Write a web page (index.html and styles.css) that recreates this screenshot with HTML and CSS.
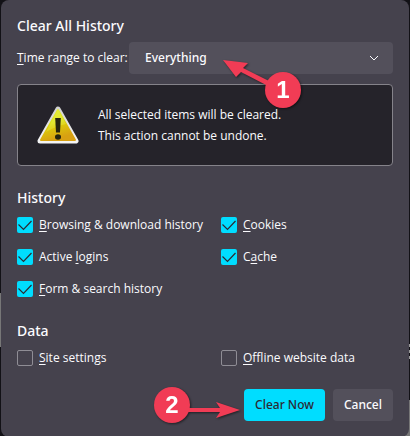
FILE: index.html
```html
<!DOCTYPE html>
<html lang="en">
<head>
<meta charset="utf-8">
<meta name="viewport" content="width=device-width, initial-scale=1">
<title>Clear All History</title>
<link rel="stylesheet" href="styles.css">
</head>
<body>
<form class="dialog">
  <h1 class="title">Clear All History</h1>
  <div class="range">
    <label for="range"><u>T</u>ime range to clear:</label>
    <div class="select-wrap">
      <select id="range" class="select">
        <option>Everything</option>
      </select>
      <svg class="chevron" viewBox="0 0 10 6" aria-hidden="true"><path d="M1 1l4 4 4-4"/></svg>
    </div>
  </div>
  <div class="warning">
    <svg class="warning-icon" viewBox="0 0 42 38" aria-hidden="true">
      <defs>
        <linearGradient id="yellow" x1="0" y1="0" x2="0.35" y2="1">
          <stop offset="0" stop-color="#e4ee32"/>
          <stop offset="0.5" stop-color="#dde01c"/>
          <stop offset="0.6" stop-color="#dccb0a"/>
          <stop offset="1" stop-color="#d8a012"/>
        </linearGradient>
        <linearGradient id="rim" x1="0" y1="0" x2="0" y2="1">
          <stop offset="0" stop-color="#d2d2d2"/>
          <stop offset="1" stop-color="#f4f4f4"/>
        </linearGradient>
      </defs>
      <path d="M21 3L39 35H3Z" fill="url(#rim)" stroke="url(#rim)" stroke-width="5" stroke-linejoin="round"/>
      <path d="M21 4L38 34H4Z" fill="url(#yellow)" stroke="url(#yellow)" stroke-width="2" stroke-linejoin="round"/>
      <path d="M21 4L29 18Q19 20 9 26Z" fill="#e9f04c" opacity="0.4"/>
      <path d="M18.200 12h5.600l-.8 14.500h-4z" fill="#25240f"/>
      <ellipse cx="21" cy="31" rx="3" ry="2.800" fill="#25240f"/>
    </svg>
    <p class="warning-text">All selected items will be cleared.<br>This action cannot be undone.</p>
  </div>
  <fieldset class="group">
    <legend class="heading">History</legend>
    <div class="options">
      <label class="option"><input type="checkbox" checked><span><u>B</u>rowsing &amp; download history</span></label>
      <label class="option"><input type="checkbox" checked><span><u>C</u>ookies</span></label>
      <label class="option"><input type="checkbox" checked><span>Active <u>l</u>ogins</span></label>
      <label class="option"><input type="checkbox" checked><span>C<u>a</u>che</span></label>
      <label class="option"><input type="checkbox" checked><span><u>F</u>orm &amp; search history</span></label>
    </div>
  </fieldset>
  <fieldset class="group">
    <legend class="heading">Data</legend>
    <div class="options">
      <label class="option"><input type="checkbox"><span><u>S</u>ite settings</span></label>
      <label class="option"><input type="checkbox"><span><u>O</u>ffline website data</span></label>
    </div>
  </fieldset>
  <div class="actions">
    <button type="submit" class="button primary">Clear Now</button>
    <button type="button" class="button">Cancel</button>
  </div>
  <svg class="mark mark-one" viewBox="0 0 84 54" role="img" aria-label="Step 1">
    <path d="M2 4L27 7L22 12L50 26L47 30L20 16L15 21Z"/>
    <circle cx="62" cy="34" r="18"/>
    <text x="62" y="42">1</text>
  </svg>
  <svg class="mark mark-two" viewBox="0 0 90 42" role="img" aria-label="Step 2">
    <path d="M34 22H67L63 16L87 24L63 32L67 26H34Z"/>
    <circle cx="19" cy="19" r="18"/>
    <text x="19" y="27">2</text>
  </svg>
</form>
</body>
</html>
```
FILE: styles.css
```css
* {
  box-sizing: border-box;
}

body {
  margin: 0;
  padding: 0 1px;
  min-height: 100vh;
  background:
    linear-gradient(#777, #777) 0 293px / 1px 54px no-repeat,
    linear-gradient(#777, #777) 100% 100% / 8px 37px no-repeat,
    repeating-linear-gradient(#999 0 3px, #121116 3px 6px) 100% 344px / 1px 16px no-repeat,
    #121116;
  color: #fbfbfe;
  font: 12px/20px "Open Sans", "Noto Sans", sans-serif;
}

.dialog {
  position: relative;
  min-height: 100vh;
  padding: 16px;
  border-radius: 8px;
  background: #45424d;
}

.title,
.heading {
  margin: 0;
  padding: 0;
  font: 500 14px/20px "Noto Sans", sans-serif;
}

u {
  text-underline-offset: 2px;
}

.range {
  display: flex;
  align-items: center;
  margin-top: 6px;
}

.range label {
  flex: 0 0 112px;
  white-space: nowrap;
}

.select-wrap {
  position: relative;
  flex: 1;
}

.select {
  display: block;
  appearance: none;
  width: 100%;
  height: 32px;
  padding: 0 16px;
  border: 0;
  border-radius: 4px;
  background: #53505b;
  color: inherit;
  font: 500 12px/20px "Noto Sans", sans-serif;
}

.chevron {
  position: absolute;
  top: 13px;
  right: 14px;
  width: 10px;
  height: 6px;
  fill: none;
  stroke: #fbfbfe;
  pointer-events: none;
}

.warning {
  display: flex;
  align-items: center;
  gap: 19px;
  margin-top: 10px;
  padding: 19px;
  border: 1px solid #85838a;
  border-radius: 4px;
  background: #25232a;
}

.warning-icon {
  width: 42px;
  height: 38px;
}

.warning-text {
  margin: 0;
  line-height: 21px;
}

.group {
  min-width: 0;
  margin: 22px 0 0;
  padding: 0;
  border: 0;
}

.options {
  display: grid;
  grid-template-columns: 204px 1fr;
  row-gap: 12px;
  padding-top: 7px;
}

.option {
  display: flex;
  align-items: center;
  gap: 6px;
  white-space: nowrap;
}

.option input {
  appearance: none;
  flex: none;
  width: 16px;
  height: 16px;
  margin: 0;
  border: 1px solid #8f8d95;
  border-radius: 2px;
  background: #45424d;
}

.option input:checked {
  border: 0;
  background: #00ddff url("data:image/svg+xml,%3Csvg xmlns='http://www.w3.org/2000/svg' viewBox='0 0 16 16'%3E%3Cpath d='M1.500 7.500l5 5 8-8.500' fill='none' stroke='%232b2a33' stroke-width='1.200'/%3E%3C/svg%3E");
}

.actions {
  display: flex;
  justify-content: flex-end;
  gap: 8px;
  margin-top: 21px;
}

.button {
  height: 32px;
  padding: 0 11px;
  border: 0;
  border-radius: 4px;
  background: #53505b;
  color: #fbfbfe;
  font: 500 12px/20px "Noto Sans", sans-serif;
}

.primary {
  background: #00ddff;
  color: #2b2a33;
}

.mark {
  position: absolute;
  pointer-events: none;
  fill: #f13c55;
  filter: drop-shadow(1px 1px 1px #0008);
}

.mark text {
  fill: #fff;
  font: bold 24px "Liberation Sans", sans-serif;
  text-anchor: middle;
}

.mark-one {
  top: 56px;
  left: 220px;
  width: 84px;
  height: 54px;
}

.mark-two {
  right: 166px;
  bottom: 9px;
  width: 90px;
  height: 42px;
}
```
